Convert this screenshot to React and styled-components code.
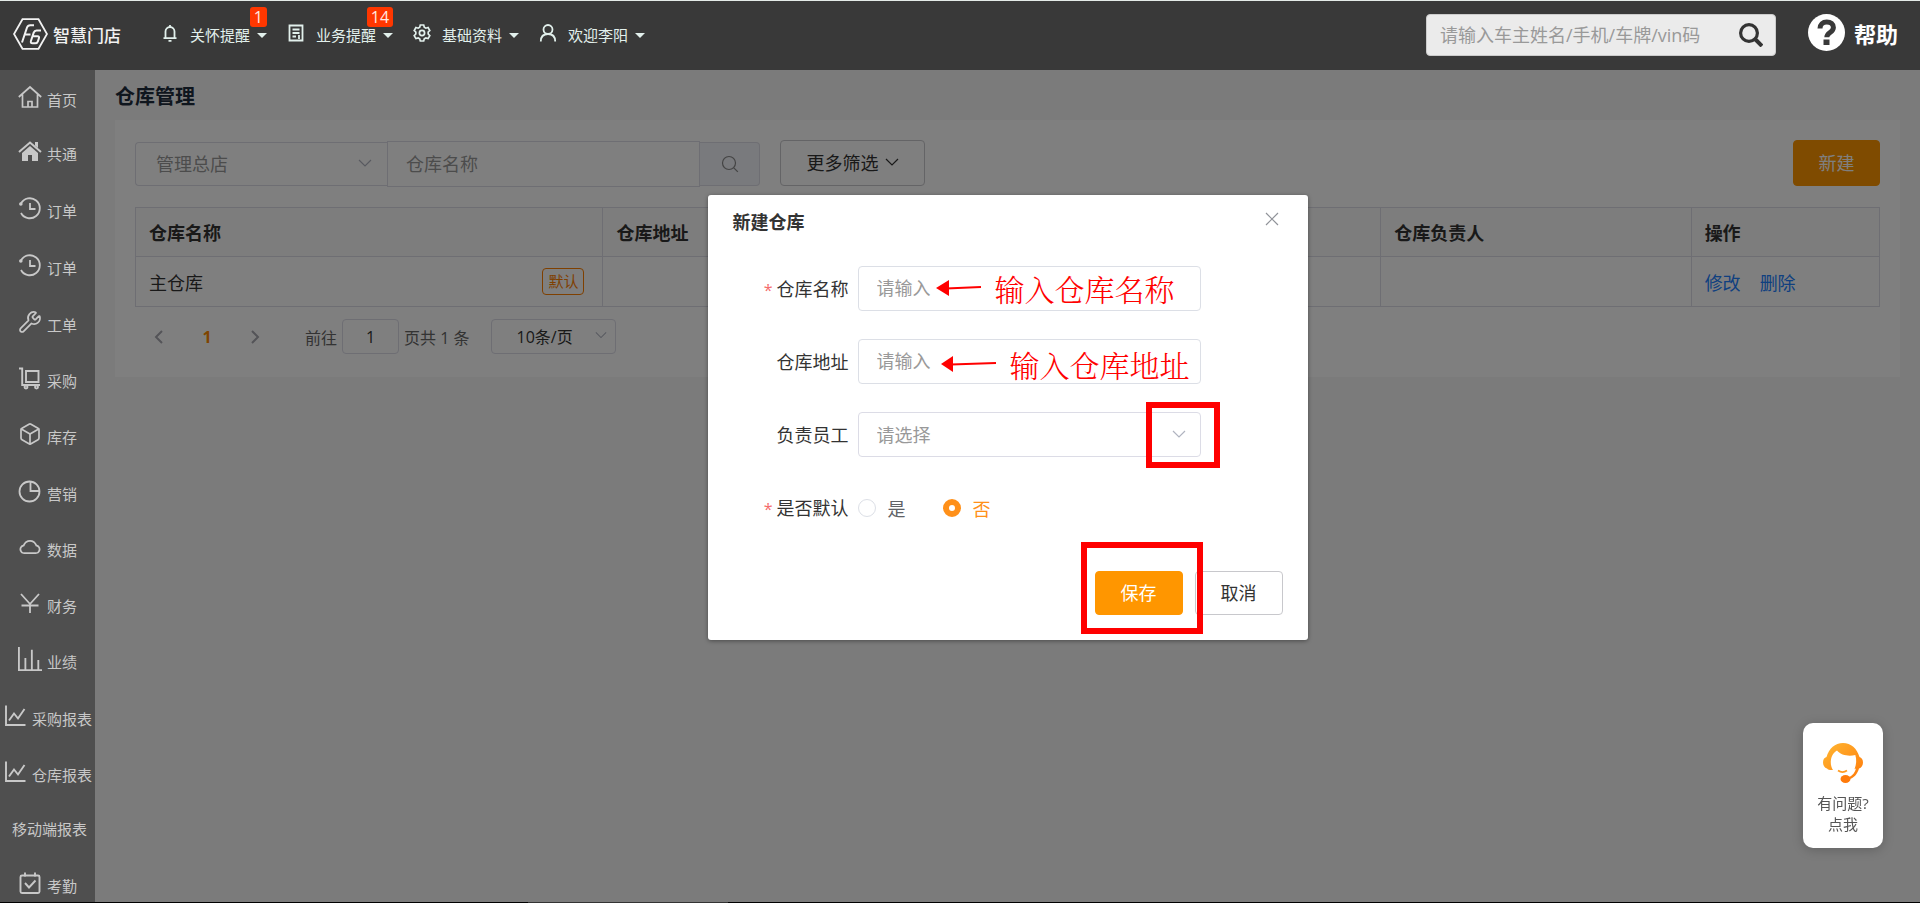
import React, { useState } from 'react';
import styled, { createGlobalStyle, css } from 'styled-components';
import { Box, Wrench } from 'lucide-react';
import { AiOutlineCloud } from 'react-icons/ai';

const GlobalStyle = createGlobalStyle`
  * {
    box-sizing: border-box;
  }

  body {
    margin: 0;
  }

  body,
  button,
  input,
  select {
    font-family: 'Open Sans', 'Noto Sans CJK SC', sans-serif;
  }

  button,
  select {
    cursor: pointer;
  }

  a {
    text-decoration: none;
  }
`;

const Page = styled.div`
  display: flex;
  flex-direction: column;
  height: 100vh;
  overflow: hidden;
  color: #333333;
  font-size: 18px;
`;

const Header = styled.header`
  display: flex;
  align-items: flex-start;
  flex: none;
  height: 70px;
  padding: 13px 22px 0 13px;
  background-color: #393939;
  border-top: 1px solid #e4ebe8;
`;

const Logo = styled.a`
  display: flex;
  align-items: center;
  gap: 5px;
  height: 40px;
  color: #f2f2f2;
  font-size: 17px;
  font-weight: 500;
`;

const Nav = styled.nav`
  display: flex;
  gap: 20px;
  margin-left: 40px;
`;

const NavItem = styled.button`
  position: relative;
  display: flex;
  align-items: center;
  height: 40px;
  padding: 0;
  background: none;
  border: none;
  color: #e2f0ec;
  font-size: 15px;

  svg {
    margin-right: 11px;
    margin-bottom: 3px;
  }

  &::after {
    content: '';
    margin-top: 3px;
    margin-left: 7px;
    border: 5px solid transparent;
    border-top-color: #e2f0ec;
    border-bottom: none;
  }
`;

const Badge = styled.span`
  position: absolute;
  top: -7px;
  right: 0;
  padding: 0 4px;
  background-color: #ff3700;
  border-radius: 3px;
  color: #ffe9e0;
  font-size: 16px;
  line-height: 20px;
`;

const HeaderSearch = styled.form`
  display: flex;
  align-items: center;
  width: 350px;
  height: 42px;
  margin-left: auto;
  padding: 0 12px 0 13px;
  background-color: #ebebeb;
  border: 1px solid #cccccc;
  border-radius: 4px;

  input {
    flex: 1;
    min-width: 0;
    padding: 0;
    background: none;
    border: none;
    outline: none;
    font-size: 18px;

    &::placeholder {
      color: #999999;
      opacity: 1;
    }
  }

  button {
    display: flex;
    padding: 0;
    background: none;
    border: none;
    color: #333333;
  }
`;

const Help = styled.a`
  display: flex;
  align-items: center;
  gap: 9px;
  height: 37px;
  margin-left: 32px;
  color: #ffffff;
  font-size: 22px;
  font-weight: 700;
`;

const Body = styled.div`
  display: flex;
  flex: 1;
  min-height: 0;
`;

const Sidebar = styled.nav`
  flex: none;
  width: 95px;
  overflow: hidden;
  background-color: #4f4f4f;
`;

const itemHeights = { small: 54, medium: 56, large: 57 };

const SideItem = styled.a`
  display: flex;
  align-items: flex-end;
  gap: 5px;
  height: ${({ $size }) => itemHeights[$size]}px;
  padding: 0 0 17px ${({ $wide }) => ($wide ? '3px' : '18px')};
  color: #c8c8c8;
  font-size: 15px;
  line-height: 18px;
  white-space: nowrap;

  svg {
    flex: none;
  }

  ${({ $plain }) =>
    $plain &&
    css`
      padding-left: 12px;
    `}
`;

const Main = styled.main`
  position: relative;
  flex: 1;
  min-width: 0;
  padding: 13px 20px;
  background-color: #f7f7f7;
`;

const Title = styled.h1`
  margin: 0 0 9px;
  color: #1f2d3d;
  font-size: 20px;
  font-weight: 700;
  line-height: 28px;
`;

const Panel = styled.section`
  padding: 20px 20px 23px;
  background-color: #ffffff;
`;

const Toolbar = styled.div`
  display: flex;
  align-items: flex-start;
  gap: 20px;
  margin-bottom: 19px;
`;

const FilterGroup = styled.form`
  display: flex;
  align-items: center;
  width: 625px;
  height: 48px;

  & > input {
    flex: 1;
    min-width: 0;
    height: 46px;
    padding: 0 18px;
    background: none;
    border: 1px solid #dcdce6;
    outline: none;
    font-size: 18px;

    &::placeholder {
      color: #999999;
      opacity: 1;
    }
  }

  & > button {
    display: flex;
    align-items: center;
    justify-content: center;
    width: 60px;
    height: 44px;
    background-color: #f2f4fa;
    border: 1px solid #dcdce6;
    border-left: none;
    border-radius: 0 4px 4px 0;
    color: #888888;
  }
`;

const SelectBox = styled.div`
  position: relative;
  flex: none;
  width: ${({ $width }) => $width}px;
  height: ${({ $height }) => $height}px;

  select {
    width: 100%;
    height: 100%;
    padding: 0 ${({ $pad }) => $pad}px;
    appearance: none;
    background: none;
    border: 1px solid #dcdce6;
    border-radius: ${({ $joined }) => ($joined ? '4px 0 0 4px' : '4px')};
    border-right-width: ${({ $joined }) => ($joined ? '0' : '1px')};
    color: ${({ $dark }) => ($dark ? '#333333' : '#999999')};
    font-size: ${({ $dark }) => ($dark ? '16px' : '18px')};
  }

  svg {
    position: absolute;
    top: 50%;
    right: ${({ $dark }) => ($dark ? '9px' : '15px')};
    margin-top: -8px;
    color: #b0b4c0;
    pointer-events: none;
  }
`;

const Button = styled.button`
  display: flex;
  align-items: center;
  justify-content: center;
  gap: 6px;
  width: ${({ $width }) => $width}px;
  height: ${({ $height }) => $height}px;
  padding: 0 0 3px;
  background-color: ${({ $primary }) => ($primary ? '#ff9600' : '#ffffff')};
  border: 1px solid ${({ $primary }) => ($primary ? '#ff9600' : '#c8c8cc')};
  border-radius: 4px;
  color: ${({ $primary }) => ($primary ? '#ffffff' : '#333333')};
  font-size: 18px;
`;

const PushRight = styled.div`
  margin-left: auto;
`;

const Table = styled.table`
  width: 100%;
  border-collapse: collapse;
  table-layout: fixed;
  border: 1px solid #dcdce6;

  th,
  td {
    height: 50px;
    padding: 0 13px;
    border: 1px solid #dcdce6;
    text-align: left;
  }

  th {
    height: 49px;
    background-color: #fafafa;
    font-weight: 700;
  }

  td a {
    margin-right: 19px;
    color: #2080ff;
  }
`;

const NameCell = styled.div`
  display: flex;
  align-items: center;
  justify-content: space-between;
  padding-right: 5px;
`;

const Tag = styled.span`
  padding: 0 5px;
  border: 1px solid #ff8000;
  border-radius: 4px;
  color: #ff8000;
  font-size: 15px;
  line-height: 25px;
`;

const Pagination = styled.div`
  display: flex;
  align-items: center;
  margin-top: 12px;
  padding-left: 16px;
  color: #666666;
  font-size: 16px;

  input {
    width: 57px;
    height: 35px;
    margin: 0 5px;
    padding: 0;
    background: none;
    border: 1px solid #dcdce6;
    border-radius: 4px;
    color: #333333;
    font-size: 16px;
    text-align: center;
  }

  label {
    margin-left: 42px;
  }
`;

const PageButton = styled.button`
  display: flex;
  align-items: center;
  justify-content: center;
  width: ${({ $current }) => ($current ? '80px' : '16px')};
  padding: 0;
  background: none;
  border: none;
  color: ${({ $current }) => ($current ? '#ff8800' : '#a8a8b0')};
  font-size: 16px;
  font-weight: 700;
`;

const Total = styled.span`
  margin-right: 22px;
`;

const Mask = styled.div`
  position: absolute;
  inset: 0;
  display: flex;
  align-items: flex-start;
  justify-content: center;
  padding-top: 125px;
  background-color: rgba(0, 0, 0, 0.5);
`;

const Dialog = styled.div`
  position: relative;
  width: 600px;
  padding: 12px 25px 25px;
  background-color: #ffffff;
  border-radius: 3px;
  box-shadow: 0 1px 4px rgba(0, 0, 0, 0.4);
`;

const DialogHeader = styled.div`
  display: flex;
  justify-content: space-between;
  height: 59px;

  h2 {
    margin: 0;
    font-size: 18px;
    font-weight: 700;
    line-height: 30px;
  }

  button {
    display: flex;
    height: 14px;
    margin-top: 5px;
    margin-right: 4px;
    padding: 0;
    background: none;
    border: none;
    color: #909399;
  }
`;

const FormRow = styled.div`
  display: flex;
  align-items: center;
  height: 45px;
  margin-bottom: 28px;

  & > input {
    width: 343px;
    height: 45px;
    padding: 0 18px 2px;
    border: 1px solid #dcdfe6;
    border-radius: 4px;
    outline: none;
    font-size: 18px;

    &::placeholder {
      color: #999999;
      opacity: 1;
    }
  }
`;

const labelStyle = css`
  width: 116px;
  margin-right: 9px;
  padding-bottom: 2px;
  text-align: right;

  &::before {
    content: ${({ $required }) => ($required ? "'*'" : "''")};
    margin-right: 4px;
    color: #f56c6c;
    font-size: 16px;
  }
`;

const Label = styled.label`
  ${labelStyle}
`;

const GroupLabel = styled.span`
  ${labelStyle}
`;

const Radio = styled.label`
  display: flex;
  align-items: center;
  margin-right: 37px;
  color: ${({ $checked }) => ($checked ? '#ff9019' : '#606266')};

  input {
    width: 18px;
    height: 18px;
    margin: 0 12px 0 0;
    appearance: none;
    background-color: #ffffff;
    border: 1px solid #dcdfe6;
    border-radius: 50%;

    &:checked {
      border: 6px solid #ff9019;
    }
  }
`;

const DialogFooter = styled.div`
  display: flex;
  justify-content: flex-end;
  gap: 12px;
  padding-top: 13px;
`;

// red notes drawn over the dialog
const NoteBox = styled.div`
  position: absolute;
  top: ${({ $top }) => $top}px;
  left: ${({ $left }) => $left}px;
  width: ${({ $width }) => $width}px;
  height: ${({ $height }) => $height}px;
  border: 6px solid #ff0000;
  pointer-events: none;
`;

const Note = styled.div`
  position: absolute;
  top: ${({ $top }) => $top}px;
  left: ${({ $left }) => $left}px;
  display: flex;
  align-items: center;
  gap: 13px;
  color: #ff0000;
  font-family: 'Noto Serif CJK SC', 'Noto Sans CJK SC', serif;
  font-size: 30px;
  font-weight: 300;
  line-height: 34px;
  white-space: nowrap;
  pointer-events: none;
`;

const Service = styled.a`
  position: fixed;
  right: 37px;
  bottom: 55px;
  display: flex;
  flex-direction: column;
  align-items: center;
  width: 80px;
  height: 125px;
  padding-top: 20px;
  background-color: #ffffff;
  border-radius: 10px;
  box-shadow: 0 2px 12px rgba(0, 0, 0, 0.2);
  color: #555555;
  font-size: 15px;
  line-height: 21px;
  text-align: center;

  svg {
    margin-bottom: 10px;
  }
`;

const BottomLine = styled.footer`
  flex: none;
  height: 1px;
  background: linear-gradient(#333333, #333333) 528px 0 / 200px 1px no-repeat #000000;
`;

const Icon = ({ size = 24, width = 2, box = 24, children }) => (
  <svg
    width={size}
    height={size}
    viewBox={`0 0 ${box} ${box}`}
    fill="none"
    stroke="currentColor"
    strokeWidth={width}
    aria-hidden="true"
  >
    {children}
  </svg>
);

const LogoMark = () => (
  <svg width="35" height="32" viewBox="0 0 35 32" fill="none" stroke="#f2f2f2" aria-hidden="true">
    <path d="M9.5 1.2h16L34 16l-8.500 14.800h-16L1 16z" strokeWidth="1.800" />
    <path d="M9 24.500 14 9.500q.8-2.300 3.200-2.300H21M11 16.500h6.500" strokeWidth="2" />
    <path d="M28 12.500h-4.500q-2 0-2.800 2.200l-2.700 8q-.8 2.600 1.500 2.600h2.700q2 0 2.700-2l1-3q.7-2-1.400-2h-4.500" strokeWidth="2" />
  </svg>
);

const Chevron = ({ size = 14 }) => (
  <Icon size={size} box={14} width={1.2}>
    <path d="m1 4 6 6 6-6" />
  </Icon>
);

const BellIcon = () => (
  <Icon size={18} box={18} width={1.8}>
    <path d="M4.500 14V7.500a4.500 4.500 0 0 1 9 0V14M2.500 14.200h13M9 1v2M7.500 16.800h3" />
  </Icon>
);

const DocIcon = () => (
  <Icon size={18} box={18} width={1.8}>
    <path d="M2.500 1.500h13v15h-13zM5.500 5.500h7M5.500 9h7M5.500 12.500h3.500M12 11v4" />
  </Icon>
);

const GearIcon = () => (
  <Icon size={18} box={18} width={1.7}>
    <path d="M7.300 1h3.400l.6 2.300 1.500.9 2.300-.7 1.700 3L15.200 8v2l1.600 1.600-1.700 3-2.300-.7-1.500.9-.6 2.200H7.300l-.6-2.200-1.500-.9-2.300.7-1.700-3L2.800 10V8L1.200 6.500l1.700-3 2.300.7 1.500-.9z" />
    <circle cx="9" cy="9" r="2.600" />
  </Icon>
);

const UserIcon = () => (
  <Icon size={18} box={18} width={1.8}>
    <circle cx="9" cy="5.500" r="4.500" />
    <path d="M1.800 17.500c0-4.500 2.600-7.500 7.200-7.500s7.200 3 7.200 7.500" />
  </Icon>
);

const HomeIcon = () => (
  <Icon width={1.7}>
    <path d="M.8 12 12 2l11.200 10M4.500 9.500V22h15V9.500M10 22v-5.500h4V22" />
  </Icon>
);

const HomeFillIcon = () => (
  <Icon width={2}>
    <path d="m1 13 11-9.500L23 13" />
    <path d="M12 7 4 14v8h6v-6h4v6h6v-8zM17 3h3v6l-3-2.600z" fill="currentColor" stroke="none" />
  </Icon>
);

const HistoryIcon = () => (
  <Icon width={1.8}>
    <path d="M3 7.500A10 10 0 1 1 3 17M12 7v6h5.500" />
    <circle cx="2.800" cy="8" r="1.800" fill="currentColor" stroke="none" />
  </Icon>
);

const CartIcon = () => (
  <Icon width={1.9}>
    <path d="M1 2.500h3.200V19H22M8 5h12.500v11H8z" />
    <circle cx="8" cy="21" r="1.500" />
    <circle cx="18.500" cy="21" r="1.500" />
  </Icon>
);

const PieIcon = () => (
  <Icon width={1.8}>
    <circle cx="11.500" cy="12.500" r="10" />
    <path d="M12.500 3v9h9" />
  </Icon>
);

const YenIcon = () => (
  <Icon width={1.8}>
    <path d="m3 3 9 10 9-10M12 13v9M3.500 14.500h17" />
  </Icon>
);

const BarsIcon = () => (
  <Icon size={24} box={26} width={2}>
    <path d="M1 0v25h25M8 24V12M15 24V3M22 24V14" />
  </Icon>
);

const LineIcon = () => (
  <Icon width={1.9}>
    <path d="M3 1.500V21h19.500M6 16.500l5-7 4 5 6.500-9.500" />
  </Icon>
);

const CheckIcon = () => (
  <Icon width={1.9}>
    <rect x="2.500" y="4.500" width="19" height="17.500" rx="1.500" />
    <path d="M7 1.500v4M17 1.500v4M7 12l4 4.500 6.500-7" />
  </Icon>
);

const HelpIcon = () => (
  <svg width="37" height="37" viewBox="0 0 37 37" aria-hidden="true">
    <circle cx="18.500" cy="18.500" r="18.500" fill="#ffffff" />
    <path
      d="M12 14.500c0-4 2.700-6.500 6.800-6.500 4 0 6.600 2.200 6.600 5.500 0 5-6.600 5-6.600 9.700"
      fill="none"
      stroke="#393939"
      strokeWidth="5"
    />
    <path d="M15.500 25.500h6v5.500h-6z" fill="#393939" />
  </svg>
);

const ServiceIcon = () => (
  <svg width="40" height="40" viewBox="0 0 40 40" aria-hidden="true">
    <defs>
      <linearGradient id="service" x1="0" y1="0" x2="1" y2="1">
        <stop offset="0" stopColor="#ffb833" />
        <stop offset="1" stopColor="#ff7a0a" />
      </linearGradient>
    </defs>
    <path
      d="M3.500 14C6 5.500 12 0 20 0s14 5.500 16.500 14c2.200.6 3.500 2.800 3.500 5.500 0 3-1.500 5.200-4 6-1.800 6-5.500 9.500-9 10.500l-.5-2c3-1.500 5.500-4.500 6.500-8.500l-1.500.8c2-5 2.200-10 .8-14.300C26 13.500 18 12.500 14 7.500 9 10 6.500 17 8.500 24c.4 1.300 1 2.200 1.500 3-2.700.3-5-.4-6-1.500-2.500-.8-4-3-4-6S1.300 14.600 3.500 14z"
      fill="url(#service)"
    />
    <path d="M15 27.500q4.500 3.200 9 0" fill="none" stroke="#ff9a20" strokeWidth="1.600" />
    <ellipse cx="22.500" cy="36" rx="5" ry="4" fill="#ff7a0a" />
  </svg>
);

const navItems = [
  { icon: <BellIcon />, text: '关怀提醒', count: 1 },
  { icon: <DocIcon />, text: '业务提醒', count: 14 },
  { icon: <GearIcon />, text: '基础资料' },
  { icon: <UserIcon />, text: '欢迎李阳' },
];

const sideItems = [
  { icon: <HomeIcon />, text: '首页', size: 'medium' },
  { icon: <HomeFillIcon />, text: '共通', size: 'small' },
  { icon: <HistoryIcon />, text: '订单', size: 'large' },
  { icon: <HistoryIcon />, text: '订单', size: 'large' },
  { icon: <Wrench size={24} strokeWidth={1.7} />, text: '工单', size: 'large' },
  { icon: <CartIcon />, text: '采购', size: 'medium' },
  { icon: <Box size={24} strokeWidth={1.7} />, text: '库存', size: 'medium' },
  { icon: <PieIcon />, text: '营销', size: 'large' },
  { icon: <AiOutlineCloud size={24} />, text: '数据', size: 'medium' },
  { icon: <YenIcon />, text: '财务', size: 'medium' },
  { icon: <BarsIcon />, text: '业绩', size: 'medium' },
  { icon: <LineIcon />, text: '采购报表', size: 'large', wide: true },
  { icon: <LineIcon />, text: '仓库报表', size: 'medium', wide: true },
  { text: '移动端报表', size: 'small' },
  { icon: <CheckIcon />, text: '考勤', size: 'large' },
];

function CreateDialog() {
  const [isDefault, setIsDefault] = useState('no');

  const onChange = (e) => setIsDefault(e.target.value);

  return (
    <Dialog role="dialog" aria-labelledby="dialog-title">
      <DialogHeader>
        <h2 id="dialog-title">新建仓库</h2>
        <button type="button" aria-label="关闭">
          <Icon size={14} box={14} width={1.2}>
            <path d="m1 1 12 12M13 1 1 13" />
          </Icon>
        </button>
      </DialogHeader>
      <FormRow>
        <Label htmlFor="name" $required>
          仓库名称
        </Label>
        <input id="name" type="text" placeholder="请输入" />
      </FormRow>
      <FormRow>
        <Label htmlFor="address">仓库地址</Label>
        <input id="address" type="text" placeholder="请输入" />
      </FormRow>
      <FormRow>
        <Label htmlFor="staff">负责员工</Label>
        <SelectBox $width={343} $height={45} $pad={18}>
          <select id="staff">
            <option>请选择</option>
          </select>
          <Chevron />
        </SelectBox>
      </FormRow>
      <FormRow role="radiogroup" aria-labelledby="default-label">
        <GroupLabel id="default-label" $required>
          是否默认
        </GroupLabel>
        <Radio $checked={isDefault === 'yes'}>
          <input type="radio" name="isDefault" value="yes" checked={isDefault === 'yes'} onChange={onChange} />是
        </Radio>
        <Radio $checked={isDefault === 'no'}>
          <input type="radio" name="isDefault" value="no" checked={isDefault === 'no'} onChange={onChange} />否
        </Radio>
      </FormRow>
      <DialogFooter>
        <Button type="button" $primary $width={88} $height={44}>
          保存
        </Button>
        <Button type="button" $width={88} $height={44}>
          取消
        </Button>
      </DialogFooter>

      <Note $top={76} $left={228}>
        <svg width="46" height="16" viewBox="0 0 46 16" aria-hidden="true">
          <path d="M0 8 13 0v16z" fill="#ff0000" />
          <path d="M10 8.500 45 7" stroke="#ff0000" strokeWidth="2" />
        </svg>
        输入仓库名称
      </Note>
      <Note $top={152} $left={233}>
        <svg width="56" height="16" viewBox="0 0 56 16" aria-hidden="true">
          <path d="M0 8 12 0v16z" fill="#ff0000" />
          <path d="M10 8.500 55 7" stroke="#ff0000" strokeWidth="2" />
        </svg>
        输入仓库地址
      </Note>
      <NoteBox $top={207} $left={438} $width={74} $height={66} />
      <NoteBox $top={347} $left={373} $width={122} $height={92} />
    </Dialog>
  );
}

export default function App() {
  return (
    <Page>
      <GlobalStyle />
      <Header>
        <Logo href="#">
          <LogoMark />
          智慧门店
        </Logo>
        <Nav>
          {navItems.map(({ icon, text, count }) => (
            <NavItem key={text} type="button">
              {icon}
              {text}
              {count && <Badge>{count}</Badge>}
            </NavItem>
          ))}
        </Nav>
        <HeaderSearch>
          <input
            type="text"
            aria-label="搜索"
            placeholder="请输入车主姓名/手机/车牌/vin码"
          />
          <button type="button" aria-label="搜索">
            <Icon width={3.2}>
              <circle cx="10" cy="10" r="8.400" />
              <path d="m16 16 7 7" strokeWidth="4" />
            </Icon>
          </button>
        </HeaderSearch>
        <Help href="#">
          <HelpIcon />
          帮助
        </Help>
      </Header>
      <Body>
        <Sidebar>
          {sideItems.map(({ icon, text, size, wide }, i) => (
            <SideItem key={i} href="#" $size={size} $wide={wide} $plain={!icon}>
              {icon}
              {text}
            </SideItem>
          ))}
        </Sidebar>
        <Main>
          <Title>仓库管理</Title>
          <Panel>
            <Toolbar>
              <FilterGroup>
                <SelectBox $width={252} $height={44} $pad={20} $joined>
                  <select aria-label="门店">
                    <option>管理总店</option>
                  </select>
                  <Chevron />
                </SelectBox>
                <input type="text" aria-label="仓库名称" placeholder="仓库名称" />
                <button type="button" aria-label="查询">
                  <Icon size={18} box={18} width={1.2}>
                    <circle cx="8" cy="8" r="6.500" />
                    <path d="m12.800 12.800 4 4" />
                  </Icon>
                </button>
              </FilterGroup>
              <Button type="button" $width={145} $height={46}>
                更多筛选
                <Chevron />
              </Button>
              <PushRight>
                <Button type="button" $primary $width={87} $height={46}>
                  新建
                </Button>
              </PushRight>
            </Toolbar>
            <Table>
              <colgroup>
                <col width="26.8%" />
                <col width="44.6%" />
                <col width="17.8%" />
                <col />
              </colgroup>
              <thead>
                <tr>
                  <th>仓库名称</th>
                  <th>仓库地址</th>
                  <th>仓库负责人</th>
                  <th>操作</th>
                </tr>
              </thead>
              <tbody>
                <tr>
                  <td>
                    <NameCell>
                      主仓库
                      <Tag>默认</Tag>
                    </NameCell>
                  </td>
                  <td />
                  <td />
                  <td>
                    <a href="#">修改</a>
                    <a href="#">删除</a>
                  </td>
                </tr>
              </tbody>
            </Table>
            <Pagination>
              <PageButton type="button" aria-label="上一页">
                <Icon size={16} box={16}>
                  <path d="m11 2-6 6 6 6" />
                </Icon>
              </PageButton>
              <PageButton type="button" $current>
                1
              </PageButton>
              <PageButton type="button" aria-label="下一页">
                <Icon size={16} box={16}>
                  <path d="m5 2 6 6-6 6" />
                </Icon>
              </PageButton>
              <label htmlFor="page">前往</label>
              <input id="page" type="text" defaultValue="1" />
              <Total>页共 1 条</Total>
              <SelectBox $width={125} $height={35} $pad={24} $dark>
                <select aria-label="每页条数">
                  <option>10条/页</option>
                </select>
                <Chevron size={12} />
              </SelectBox>
            </Pagination>
          </Panel>
          <Mask>
            <CreateDialog />
          </Mask>
        </Main>
      </Body>
      <BottomLine />
      <Service href="#">
        <ServiceIcon />
        有问题?
        <br />
        点我
      </Service>
    </Page>
  );
}
